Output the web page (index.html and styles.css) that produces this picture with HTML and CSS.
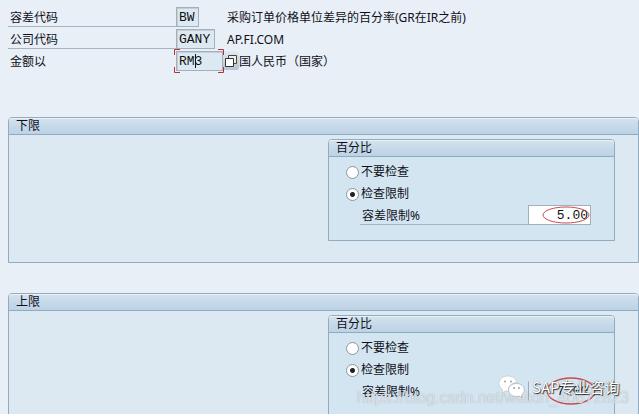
FILE: index.html
```html
<!DOCTYPE html>
<html lang="zh-CN">
<head>
<meta charset="utf-8">
<title>容差限制</title>
<link rel="stylesheet" href="styles.css">
</head>
<body>
<main class="screen">
  <form class="form">
    <section class="head">
      <div class="row">
        <label class="label lined" for="key">容差代码</label>
        <span class="slot"><input class="field w-xs" id="key" value="BW" readonly></span>
        <span class="note">采购订单价格单位差异的百分率(GR在IR之前)</span>
      </div>
      <div class="row">
        <label class="label lined" for="company">公司代码</label>
        <span class="slot"><input class="field w-sm" id="company" value="GANY" readonly></span>
        <span class="note">AP.FI.COM</span>
      </div>
      <div class="row">
        <label class="label" for="currency">金额以</label>
        <span class="focus">
          <input class="field w-md" id="currency" value="RM3">
          <svg class="corners" viewBox="0 0 50 24" aria-hidden="true"><path d="M.5 6V.5H6M44 .5h5.500V6M.5 18v5.500H6M44 23.500h5.500V18" fill="none" stroke="#b5323c"/><path d="M21.500 5v14" stroke="#111"/></svg>
        </span>
        <button class="help" type="button" aria-label="选择"><svg viewBox="0 0 14 16"><path d="M4.500 2.500h8v8h-8z" fill="#eee" stroke="#444"/><path d="M1.500 5.500h8v8h-8z" fill="#fff" stroke="#333"/></svg></button>
        <span class="country">国人民币（国家）</span>
      </div>
    </section>

    <section class="group">
      <h2 class="title">下限</h2>
      <div class="body">
        <fieldset class="panel">
          <legend class="title">百分比</legend>
          <div class="options">
            <label class="option"><input class="radio" type="radio" name="low">不要检查</label>
            <label class="option"><input class="radio" type="radio" name="low" checked>检查限制</label>
            <div class="limit">
              <label class="limit-label lined" for="low-value">容差限制%</label>
              <span class="amount">
                <input class="value" id="low-value" value="5.00">
                <svg class="ring" viewBox="0 0 48 18" aria-hidden="true"><ellipse cx="24" cy="9" rx="23" ry="8" fill="none" stroke="#c94a50"/></svg>
              </span>
            </div>
          </div>
        </fieldset>
      </div>
    </section>

    <section class="group">
      <h2 class="title">上限</h2>
      <div class="body">
        <fieldset class="panel">
          <legend class="title">百分比</legend>
          <div class="options">
            <label class="option"><input class="radio" type="radio" name="high">不要检查</label>
            <label class="option"><input class="radio" type="radio" name="high" checked>检查限制</label>
            <div class="limit">
              <label class="limit-label" for="high-value">容差限制%</label>
              <span class="amount">
                <input class="value plain" id="high-value" value="7.00">
                <svg class="ring tall" viewBox="0 0 50 28" aria-hidden="true"><ellipse cx="25" cy="14" rx="24" ry="13" fill="none" stroke="#c94a50" stroke-width="1.300"/></svg>
              </span>
            </div>
          </div>
        </fieldset>
      </div>
    </section>
  </form>
  <div class="url">https://blog.csdn.net/weixin_40672823</div>
  <div class="brand">
    <svg class="wechat" viewBox="0 0 28 24" aria-hidden="true"><path d="M10 1C5 1 1 4 1 8.500c0 2.500 1.500 4.500 3.500 6L4 18l3.500-2 3 .5c-1-5 3-9 8.500-9C18 3.500 14.500 1 10 1z" fill="#fff" stroke="#b5bec5" stroke-width=".6"/><path d="M18.500 8.500c-4.500 0-8 2.800-8 6.500s3.500 6.500 8 6.500l2.500-.4 3 1.900-.6-3c1.800-1.200 2.900-3 2.900-5 0-3.700-3.300-6.500-7.800-6.500z" fill="#fff" stroke="#a5afb7" stroke-width=".7"/><g fill="#9aa5ad"><circle cx="7" cy="6.500" r="1"/><circle cx="13" cy="6.500" r="1"/><circle cx="16" cy="13" r="1"/><circle cx="21" cy="13" r="1"/></g></svg>
    <span class="brand-name">SAP专业咨询</span>
  </div>
</main>
</body>
</html>
```
FILE: styles.css
```css
* { box-sizing: border-box; }
html { background: #fff; }
body {
  margin: 0;
  font: 12px/18px "Noto Sans", "Noto Sans CJK SC", sans-serif;
  color: #101018;
}
.screen {
  position: relative;
  height: calc(100vh - 2px);
  overflow: hidden;
  background: #e8eff7;
}
.form { padding: 7px 0 0 8px; }
.head { height: 110px; }
.row { display: flex; align-items: flex-start; height: 22px; }
.label { width: 168px; height: 20px; padding: 2px 0 0 2px; line-height: 17px; }
.lined { border-bottom: 1px solid #a9b4bf; }
.slot { width: 51px; }
.field, .value {
  display: block;
  height: 20px;
  margin: 0;
  padding: 0 2px;
  border: 1px solid #a3b0b9;
  border-radius: 0;
  outline: 0;
  color: #111;
  font: 13px/18px "Liberation Mono", monospace;
}
.field { background: #dde9f2; box-shadow: inset 1px 1px #c3ced6; }
.w-xs { width: 23px; }
.w-sm { width: 39px; }
.w-md { width: 47px; }
.note, .country { padding-top: 2px; line-height: 17px; }
.focus { position: relative; z-index: 1; }
.corners { position: absolute; left: -2px; top: -2px; width: 50px; height: 24px; }
.help {
  width: 16px;
  height: 19px;
  margin: 0;
  padding: 1px;
  border: 0;
  border-radius: 2px;
  background: linear-gradient(#e4eaf0, #b4c5d3);
}
.help svg { display: block; width: 14px; height: 16px; }

.group {
  margin-bottom: 30px;
  border: 1px solid #93abc0;
  border-radius: 4px 4px 0 0;
  background: #dce9f3;
}
.title {
  width: 100%;
  height: 17px;
  margin: 0;
  padding: 0 0 0 7px;
  border-bottom: 1px solid #8faac3;
  border-radius: 3px 3px 0 0;
  background: linear-gradient(#d3e2ee, #bcd2e6);
  box-shadow: inset 0 1px #e9f2f8;
  font-size: 12px;
  font-weight: 400;
  line-height: 16px;
}
.body { padding: 4px 23px 21px 319px; }
.panel {
  min-width: 0;
  margin: 0;
  padding: 0;
  border: 1px solid #93abc0;
  border-radius: 4px 4px 0 0;
  background: #d4e5f2;
}
.panel .title { float: left; }
.options { clear: both; padding: 4px 23px 15px 17px; }
.option { display: flex; align-items: center; height: 22px; }
.radio {
  appearance: none;
  width: 13px;
  height: 13px;
  margin: 0 2px 0 0;
  border: 1px solid #8d969e;
  border-radius: 50%;
  background: #fff;
}
.radio:checked { background: radial-gradient(circle, #222 0 2px, #fff 3px); }
.limit { display: flex; height: 20px; margin-left: 14px; }
.limit-label { flex: 1; padding: 2px 0 0 2px; line-height: 17px; }
.amount { position: relative; width: 63px; }
.value { width: 100%; background: #fff; text-align: right; }
.plain { border-color: #d4e5f2 #d4e5f2 #d4e5f2 #9fabb5; background: #d9e8f3; }
.ring { position: absolute; left: 14px; top: 1px; width: 48px; height: 18px; }
.tall { left: 18px; top: -4px; width: 50px; height: 28px; }

.url {
  position: absolute;
  left: 357px;
  bottom: 6px;
  color: rgba(255, 255, 255, .7);
  font: 16px/20px "Liberation Sans", sans-serif;
  text-shadow: 0 0 1px #8593a0;
}
.brand {
  position: absolute;
  left: 498px;
  bottom: 15px;
  display: flex;
  align-items: center;
  gap: 6px;
  height: 24px;
}
.wechat { width: 28px; height: 24px; }
.brand-name {
  color: #fff;
  font: 15px/20px "Noto Sans CJK SC", sans-serif;
  text-shadow: 1px 1px 1px #333, 0 0 1px #666;
}
```
